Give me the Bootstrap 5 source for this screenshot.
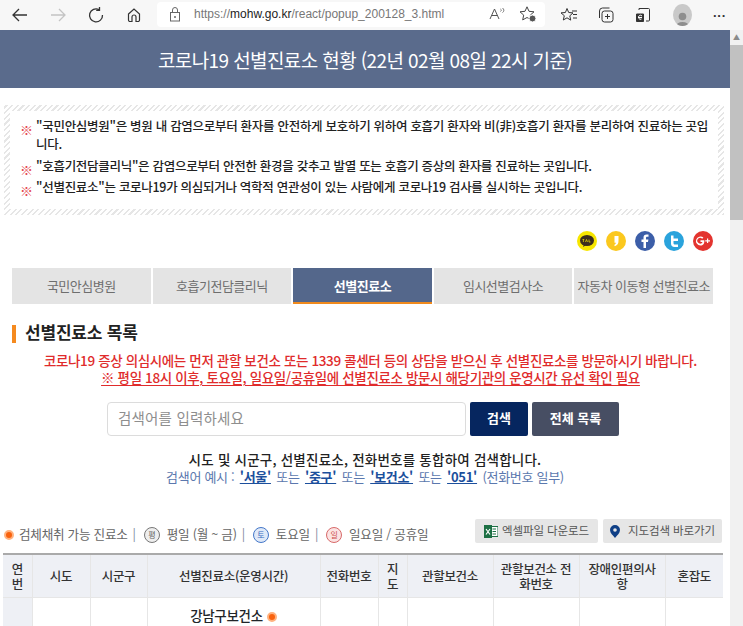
<!DOCTYPE html>
<html lang="ko">
<head>
  <meta charset="UTF-8" />
  <meta name="viewport" content="width=device-width, initial-scale=1" />
  <title>코로나19 선별진료소 현황</title>
  <link href="https://cdn.jsdelivr.net/npm/bootstrap@5.3.3/dist/css/bootstrap.min.css" rel="stylesheet" />
  <style>
    html, body { height: 626px; overflow: hidden; }
    body { font-family: "Noto Sans CJK KR", "Noto Sans", sans-serif; color: #222; background: #fff; }

    .edge-bar { height: 30px; background: #f7f7f7; padding: 0 14px 0 11px; }
    .edge-btn { width: 18px; height: 18px; flex: none; }
    .edge-gap { margin-left: 20px; }
    .edge-btn svg, .edge-tool svg { display: block; }
    .edge-url { width: 388px; height: 25px; background: #fff; border-radius: 4px; margin: -2px 0 0 14px; padding: 0 8px 0 11px; font: 12px "Liberation Sans", sans-serif; color: #777; }
    .edge-url b { font-weight: 400; color: #222; }
    .edge-url-tail { margin-left: 12px; }
    .edge-tool { margin-left: 19px; flex: none; }
    .edge-tool.first-tool { margin-left: 15px; }
    .edge-avatar { width: 19px; height: 22px; border-radius: 50%; background: #c9c9c9; overflow: hidden; margin-left: 21px; flex: none; }
    .edge-more { margin-left: 21px; font: 700 13px "Liberation Sans", sans-serif; color: #333; }

    .page-wrap { height: 596px; }
    .page-main { width: 730px; flex: none; overflow: hidden; }
    .fake-scroll { width: 13px; flex: none; background: #f1f1f1; }
    .fake-arrow { height: 15px; color: #8a8a8a; font-size: 7px; text-align: center; line-height: 15px; }
    .fake-thumb { height: 175px; background: #c1c1c1; }

    .title-bar { height: 58px; background: #5a6b8c; color: #fff; font-size: 19px; line-height: 60px; text-align: center; letter-spacing: -.6px; }

    .notice-box { margin: 17px 6px 0 4px; padding: 6px; height: 110px; background: repeating-linear-gradient(-45deg, #e6e6e6 0 1.5px, #fff 1.5px 4px); }
    .notice-inner { background: #fff; height: 100%; padding: 6px 8px 0 9px; font-size: 12.5px; font-weight: 500; letter-spacing: -.29px; line-height: 18px; color: #222; }
    .notice-line { padding-left: 17px; position: relative; margin-bottom: 3.500px; }
    .notice-mark { position: absolute; left: 1px; top: 4px; color: #e5484d; font-size: 13px; font-weight: 700; }

    .share-row { margin: 16px 17px 0 0; height: 20px; gap: 9px; }
    .share-dot { width: 20px; height: 20px; border-radius: 50%; flex: none; color: #fff; text-align: center; }
    .share-dot svg { display: block; }

    .tab-row { margin: 17px 17px 0 12px; height: 36px; gap: 2px; }
    .tab-item { background: #e4e4e4; color: #6e6e6e; font-size: 13px; letter-spacing: -.5px; line-height: 35px; text-align: center; flex: 1 1 0; white-space: nowrap; }
    .tab-item.is-on { background: #54678b; color: #fff; font-weight: 700; border-bottom: 2px solid #f08a1d; }

    .list-head { margin: 21px 0 0 12px; height: 18px; border-left: 4px solid #f58a1f; padding-left: 9px; font-size: 17px; font-weight: 700; line-height: 14px; letter-spacing: -.2px; }
    .warn-text { margin-top: 9px; color: #e02b2b; font-size: 13.500px; font-weight: 500; line-height: 17px; letter-spacing: -.37px; text-align: center; padding-left: 11px; }
    .warn-text u { text-underline-offset: 2px; }

    .search-row { margin: 16px 0 0 107px; gap: 4px; height: 34px; }
    .search-input.form-control { width: 359px; height: 34px; font-size: 14.500px; padding: 0 10px 3px; border-color: #dcdcdc; border-radius: 4px; letter-spacing: .2px; }
    .search-input::placeholder { color: #8e8e8e; }
    .search-go, .search-all { height: 34px; border: 0; border-radius: 2px; color: #fff; font-size: 13px; font-weight: 700; padding: 0 0 2px; }
    .search-go { width: 58px; background: #06265f; }
    .search-all { width: 87px; background: #474e63; }

    .hint-text { margin-top: 14px; font-size: 13px; line-height: 18px; text-align: center; }
    .hint-main { font-weight: 500; font-size: 13.500px; letter-spacing: .22px; color: #222; }
    .hint-eg { color: #5b78ae; letter-spacing: -.3px; }
    .hint-eg a { color: #1c4f9c; font-weight: 700; margin: 0 2px; }

    .legend-row { margin-top: 33px; padding: 0 8px 0 4px; height: 24px; }
    .legend-text { font-size: 12.600px; color: #666; letter-spacing: -.25px; white-space: nowrap; gap: 4px; padding-top: 7px; }
    .legend-sep { color: #7d8aa0; margin: 0 2px 0 1px; }
    .orange-dot { width: 10px; height: 10px; border-radius: 50%; background: #f9620e; border: 2px solid #ffb27f; display: inline-block; flex: none; }
    .legend-text .orange-dot { margin-right: 1px; }
    .day-badge { width: 16px; height: 16px; border-radius: 50%; font-size: 8px; line-height: 14px; text-align: center; flex: none; border: 1px solid; margin-left: 2px; margin-right: 3px; }
    .day-w { border-color: #777; color: #666; background: #eee; }
    .day-s { border-color: #4477c9; color: #3b6cc0; background: #dfe9f8; }
    .day-h { border-color: #d86a6a; color: #cc4c4c; background: #fbe3e3; }
    .tool-btn { height: 24px; background: #e6e6e6; border: 0; border-radius: 2px; font-size: 11.500px; color: #555; padding: 0; gap: 4px; letter-spacing: -.1px; white-space: nowrap; }
    .tool-xls { width: 123px; }
    .tool-map { width: 119px; margin-left: 5px; }

    .center-table.table { margin: 10px 0 0 3px; width: 720px; table-layout: fixed; border-top: 2px solid #aaa; font-size: 12.500px; letter-spacing: -.3px; }
    .center-table th { background: #eef0f5; font-weight: 500; color: #333; height: 43px; padding: 0 5px; line-height: 15px; text-align: center; vertical-align: middle; border: 1px solid #e6e6e6; border-top: 0; word-break: break-all; }
    .center-table th:first-child, .center-table td:first-child { border-left: 0; }
    .center-table th:last-child, .center-table td:last-child { border-right: 0; }
    .center-table td { height: 40px; padding: 7px 3px 0; text-align: center; vertical-align: top; border: 1px solid #e6e6e6; font-weight: 500; font-size: 13.500px; }
    .center-table td:first-child { background: #eef0f5; }
    .center-table col:nth-child(1) { width: 29px; }
    .center-table col:nth-child(2) { width: 58px; }
    .center-table col:nth-child(3) { width: 57px; }
    .center-table col:nth-child(4) { width: 173px; }
    .center-table col:nth-child(5) { width: 58px; }
    .center-table col:nth-child(6) { width: 29px; }
    .center-table col:nth-child(7), .center-table col:nth-child(8), .center-table col:nth-child(9) { width: 86px; }
    .center-table col:nth-child(10) { width: 58px; }
  </style>
</head>
<body>

  <!-- browser toolbar -->
  <div class="edge-bar d-flex align-items-center">
    <span class="edge-btn"><svg width="18" height="18" viewBox="0 0 18 18" fill="none" stroke="#333" stroke-width="1.3"><path d="M16 9H2M8 3L2 9l6 6"/></svg></span>
    <span class="edge-btn edge-gap"><svg width="18" height="18" viewBox="0 0 18 18" fill="none" stroke="#c4c4c4" stroke-width="1.3"><path d="M2 9h14M10 3l6 6-6 6"/></svg></span>
    <span class="edge-btn edge-gap"><svg width="18" height="18" viewBox="0 0 18 18" fill="none" stroke="#333" stroke-width="1.3"><path d="M12 3.600A6.500 6.500 0 1 0 15.500 9"/><path d="M12.500 1v3.300H9.200"/></svg></span>
    <span class="edge-btn edge-gap"><svg width="18" height="18" viewBox="0 0 18 18" fill="none" stroke="#333" stroke-width="1.2"><path d="M3.500 8L9 3l5.500 5v6a1.500 1.500 0 0 1-1.500 1.500h-2V11a2 2 0 0 0-4 0v4.500H5A1.500 1.500 0 0 1 3.500 14z"/></svg></span>
    <div class="edge-url d-flex align-items-center">
      <svg class="me-2" width="14" height="15" viewBox="0 0 14 15" fill="none" stroke="#666"><rect x="2.500" y="5.500" width="9" height="8.500"/><path d="M4.500 5.500V3a2.500 2.500 0 0 1 5 0v2.500"/><circle cx="7" cy="10" r=".6" fill="#666"/></svg>
      <span class="ms-1">https://<b>mohw.go.kr</b>/react/popup_200128_3.html</span>
      <svg class="ms-auto" width="18" height="16" viewBox="0 0 18 16" fill="none" stroke="#555"><path d="M1 13L5.500 3 10 13M2.700 9.500h5.600"/><path d="M11.500 3c1 .6 1 1.800 0 2.500M13.500 2c1.800 1.300 1.800 3.300 0 4.600" stroke-width=".8"/></svg>
      <svg class="edge-url-tail" width="18" height="18" viewBox="0 0 18 18" fill="none" stroke="#444"><path d="M8 1.800l2 4.500 5 .5-3.700 3.300 1 4.800L8 12.500l-4.300 2.400 1-4.800L1 6.800l5-.5z"/><circle cx="13.500" cy="13.500" r="3.500" fill="#555" stroke="#fff"/></svg>
    </div>
    <span class="edge-tool first-tool"><svg width="18" height="18" viewBox="0 0 18 18" fill="none" stroke="#333"><path d="M7 2.500l1.700 4 4.300.4-3.200 2.900.9 4.300L7 11.800 3.300 14l1-4.300L1 6.900l4.400-.4z"/><path d="M12 5h5M13 8.500h4M13 12h4"/></svg></span>
    <span class="edge-tool"><svg width="18" height="18" viewBox="0 0 18 18" fill="none" stroke="#333"><rect x="5" y="5" width="11" height="11" rx="2.500"/><path d="M2.500 12V5a3 3 0 0 1 3-3h7M10.500 8v5M8 10.500h5"/></svg></span>
    <span class="edge-tool"><svg width="18" height="18" viewBox="0 0 18 18" fill="none" stroke="#333"><path d="M5 4V2.500h9.500a1 1 0 0 1 1 1V14a1 1 0 0 1-1 1H12"/><path d="M2.500 8h7v7.500h-7z" fill="#333"/><path d="M4 11.500h4M8 10a2 2 0 1 0-.5 3" stroke="#fff"/></svg></span>
    <span class="edge-avatar"><svg width="19" height="22" viewBox="0 0 19 22" fill="#8e8e8e"><circle cx="9.500" cy="8.500" r="3.800"/><ellipse cx="9.500" cy="18.500" rx="6.500" ry="4.500"/></svg></span>
    <span class="edge-more">···</span>
  </div>

  <div class="page-wrap d-flex">
    <div class="page-main">
      <div class="title-bar">코로나19 선별진료소 현황 (22년 02월 08일 22시 기준)</div>

      <div class="notice-box">
        <div class="notice-inner">
          <div class="notice-line"><span class="notice-mark">※</span>"국민안심병원"은 병원 내 감염으로부터 환자를 안전하게 보호하기 위하여 호흡기 환자와 비(非)호흡기 환자를 분리하여 진료하는 곳입니다.</div>
          <div class="notice-line"><span class="notice-mark">※</span>"호흡기전담클리닉"은 감염으로부터 안전한 환경을 갖추고 발열 또는 호흡기 증상의 환자를 진료하는 곳입니다.</div>
          <div class="notice-line"><span class="notice-mark">※</span>"선별진료소"는 코로나19가 의심되거나 역학적 연관성이 있는 사람에게 코로나19 검사를 실시하는 곳입니다.</div>
        </div>
      </div>

      <div class="share-row d-flex justify-content-end">
        <span class="share-dot"><svg width="20" height="20" viewBox="0 0 20 20"><circle cx="10" cy="10" r="10" fill="#f7e600"/><ellipse cx="10" cy="9.500" rx="7" ry="5.500" fill="#3c2e1e"/><path d="M7 13l-1 3 4-2.500z" fill="#3c2e1e"/><path d="M5.500 8.500h1.800M6.400 8.500v2.500M8.500 11l1-2.500 1 2.500M12 8.500V11h1.500" stroke="#f7e600" stroke-width=".7" fill="none"/></svg></span>
        <span class="share-dot"><svg width="20" height="20" viewBox="0 0 20 20"><circle cx="10" cy="10" r="10" fill="#fbc81e"/><path d="M8.500 5h4v5c0 2.500-1 4.200-3.600 5.300l-.7-1.200c1-.6 1.600-1.400 1.700-2.300H8.500z" fill="#fff"/></svg></span>
        <span class="share-dot"><svg width="20" height="20" viewBox="0 0 20 20"><circle cx="10" cy="10" r="10" fill="#3c5ea8"/><path d="M11 17v-6h2l.4-2.500H11V7c0-.8.3-1.200 1.200-1.200h1.300V3.600c-.5-.1-1.200-.1-1.900-.1-2 0-3.100 1.200-3.100 3.200v1.800H6.500V11h2v6z" fill="#fff"/></svg></span>
        <span class="share-dot"><svg width="20" height="20" viewBox="0 0 20 20"><circle cx="10" cy="10" r="10" fill="#2aa3dc"/><path d="M7 4.500h2.500v3H14v2.500H9.500v2c0 1 .6 1.500 1.500 1.500h3V16h-3.500C8.200 16 7 14.600 7 12.500z" fill="#fff"/></svg></span>
        <span class="share-dot"><svg width="20" height="20" viewBox="0 0 20 20"><circle cx="10" cy="10" r="10" fill="#e3342f"/><path d="M7.500 9.200h3.800c.4 3.300-1.300 5.300-3.800 5.300a4.500 4.500 0 1 1 2.900-7.900l-1.200 1.200A2.800 2.800 0 1 0 9.600 11H7.500zM14 7.500h1.200v1.700H17v1.200h-1.800v1.700H14v-1.700h-1.800V9.200H14z" fill="#fff"/></svg></span>
      </div>

      <div class="tab-row d-flex">
        <div class="tab-item">국민안심병원</div>
        <div class="tab-item">호흡기전담클리닉</div>
        <div class="tab-item is-on">선별진료소</div>
        <div class="tab-item">임시선별검사소</div>
        <div class="tab-item">자동차 이동형 선별진료소</div>
      </div>

      <div class="list-head">선별진료소 목록</div>

      <div class="warn-text">
        코로나19 증상 의심시에는 먼저 관할 보건소 또는 1339 콜센터 등의 상담을 받으신 후 선별진료소를 방문하시기 바랍니다.<br />
        <u>※ 평일 18시 이후, 토요일, 일요일/공휴일에 선별진료소 방문시 해당기관의 운영시간 유선 확인 필요</u>
      </div>

      <div class="search-row d-flex">
        <input class="form-control search-input" type="text" placeholder="검색어를 입력하세요" />
        <button class="btn search-go" type="button">검색</button>
        <button class="btn search-all" type="button">전체 목록</button>
      </div>

      <div class="hint-text">
        <div class="hint-main">시도 및 시군구, 선별진료소, 전화번호를 통합하여 검색합니다.</div>
        <div class="hint-eg">검색어 예시 : <a href="#">'서울'</a> 또는 <a href="#">'중구'</a> 또는 <a href="#">'보건소'</a> 또는 <a href="#">'051'</a> (전화번호 일부)</div>
      </div>

      <div class="legend-row d-flex justify-content-between">
        <div class="legend-text d-flex align-items-center">
          <span class="orange-dot"></span><span>검체채취 가능 진료소</span><span class="legend-sep">|</span>
          <span class="day-badge day-w">평</span><span>평일 (월 ~ 금)</span><span class="legend-sep">|</span>
          <span class="day-badge day-s">토</span><span>토요일</span><span class="legend-sep">|</span>
          <span class="day-badge day-h">일</span><span>일요일 / 공휴일</span>
        </div>
        <div class="d-flex">
          <button class="btn tool-btn tool-xls d-flex align-items-center justify-content-center" type="button">
            <svg width="14" height="13" viewBox="0 0 14 13"><rect x="6" y="1.500" width="8" height="10" fill="#fff" stroke="#1d7044"/><path d="M8.500 4h3.500M8.500 6.500h3.500M8.500 9h3.500" stroke="#1d7044"/><rect width="8" height="13" fill="#1d7044"/><path d="M2 4l4 5.500M6 4L2 9.500" stroke="#fff" stroke-width="1.200"/></svg>
            엑셀파일 다운로드
          </button>
          <button class="btn tool-btn tool-map d-flex align-items-center justify-content-center" type="button">
            <svg class="me-1" width="10" height="13" viewBox="0 0 10 13"><path d="M5 0a5 5 0 0 1 5 5c0 3-3 5.500-5 8-2-2.500-5-5-5-8a5 5 0 0 1 5-5z" fill="#0f3f86"/><circle cx="5" cy="5" r="1.800" fill="#e6e6e6"/></svg>
            지도검색 바로가기
          </button>
        </div>
      </div>

      <table class="table center-table">
        <colgroup><col /><col /><col /><col /><col /><col /><col /><col /><col /><col /></colgroup>
        <thead>
          <tr>
            <th>연번</th>
            <th>시도</th>
            <th>시군구</th>
            <th>선별진료소(운영시간)</th>
            <th>전화번호</th>
            <th>지도</th>
            <th>관할보건소</th>
            <th>관할보건소 전화번호</th>
            <th>장애인편의사항</th>
            <th>혼잡도</th>
          </tr>
        </thead>
        <tbody>
          <tr>
            <td></td><td></td><td></td>
            <td>강남구보건소<span class="orange-dot align-middle ms-1"></span></td>
            <td></td><td></td><td></td><td></td><td></td><td></td>
          </tr>
        </tbody>
      </table>
    </div>

    <div class="fake-scroll">
      <div class="fake-arrow">▲</div>
      <div class="fake-thumb"></div>
    </div>
  </div>

  <script src="https://cdn.jsdelivr.net/npm/bootstrap@5.3.3/dist/js/bootstrap.bundle.min.js"></script>
</body>
</html>
